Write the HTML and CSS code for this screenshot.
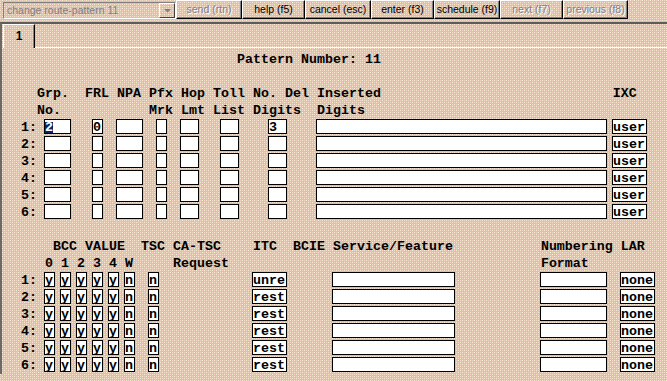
FILE: index.html
```html
<!DOCTYPE html>
<html>
<head>
<meta charset="utf-8">
<title>change route-pattern 11</title>
<link rel="stylesheet" href="styles.css">
</head>
<body>
<div class="toolbar">
  <div class="combo"><span class="combo-text">change route-pattern 11</span><span class="combo-btn"><svg width="7" height="4" viewBox="0 0 7 4"><polygon points="0,0 7,0 3.5,3.5" fill="#808080"/></svg></span></div>
  <button class="btn w66 dis">send (rtn)</button>
  <button class="btn w63">help (f5)</button>
  <button class="btn w66">cancel (esc)</button>
  <button class="btn w63">enter (f3)</button>
  <button class="btn w66">schedule (f9)</button>
  <button class="btn w63 dis">next (f7)</button>
  <button class="btn w65 dis">previous (f8)</button>
</div>
<div class="main">
  <div class="tabs"><div class="tab">1</div><div class="tab-fill"></div></div>
  <div class="form">
<div class="ln">                             Pattern Number: 11</div>
<div class="ln"></div>
<div class="ln">    Grp.  FRL NPA Pfx Hop Toll No. Del Inserted                             IXC</div>
<div class="ln">    No.           Mrk Lmt List Digits  Digits</div>
<div class="ln">  1: <span class="f w3"><span class="sel">2</span></span>   <span class="f w1">0</span>  <span class="f w3"></span>  <span class="f w1"></span>  <span class="f w2"></span>   <span class="f w2"></span>    <span class="f w2">3</span>    <span class="f w36"></span> <span class="f w4">user</span></div>
<div class="ln">  2: <span class="f w3"></span>   <span class="f w1"></span>  <span class="f w3"></span>  <span class="f w1"></span>  <span class="f w2"></span>   <span class="f w2"></span>    <span class="f w2"></span>    <span class="f w36"></span> <span class="f w4">user</span></div>
<div class="ln">  3: <span class="f w3"></span>   <span class="f w1"></span>  <span class="f w3"></span>  <span class="f w1"></span>  <span class="f w2"></span>   <span class="f w2"></span>    <span class="f w2"></span>    <span class="f w36"></span> <span class="f w4">user</span></div>
<div class="ln">  4: <span class="f w3"></span>   <span class="f w1"></span>  <span class="f w3"></span>  <span class="f w1"></span>  <span class="f w2"></span>   <span class="f w2"></span>    <span class="f w2"></span>    <span class="f w36"></span> <span class="f w4">user</span></div>
<div class="ln">  5: <span class="f w3"></span>   <span class="f w1"></span>  <span class="f w3"></span>  <span class="f w1"></span>  <span class="f w2"></span>   <span class="f w2"></span>    <span class="f w2"></span>    <span class="f w36"></span> <span class="f w4">user</span></div>
<div class="ln">  6: <span class="f w3"></span>   <span class="f w1"></span>  <span class="f w3"></span>  <span class="f w1"></span>  <span class="f w2"></span>   <span class="f w2"></span>    <span class="f w2"></span>    <span class="f w36"></span> <span class="f w4">user</span></div>
<div class="ln"></div>
<div class="ln">      BCC VALUE  TSC CA-TSC    ITC  BCIE Service/Feature           Numbering LAR</div>
<div class="ln">     0 1 2 3 4 W     Request                                       Format</div>
<div class="ln">  1: <span class="f w1">y</span> <span class="f w1">y</span> <span class="f w1">y</span> <span class="f w1">y</span> <span class="f w1">y</span> <span class="f w1">n</span>  <span class="f w1">n</span>            <span class="f w4">unre</span>      <span class="f w15"></span>           <span class="f w8"></span>  <span class="f w4">none</span></div>
<div class="ln">  2: <span class="f w1">y</span> <span class="f w1">y</span> <span class="f w1">y</span> <span class="f w1">y</span> <span class="f w1">y</span> <span class="f w1">n</span>  <span class="f w1">n</span>            <span class="f w4">rest</span>      <span class="f w15"></span>           <span class="f w8"></span>  <span class="f w4">none</span></div>
<div class="ln">  3: <span class="f w1">y</span> <span class="f w1">y</span> <span class="f w1">y</span> <span class="f w1">y</span> <span class="f w1">y</span> <span class="f w1">n</span>  <span class="f w1">n</span>            <span class="f w4">rest</span>      <span class="f w15"></span>           <span class="f w8"></span>  <span class="f w4">none</span></div>
<div class="ln">  4: <span class="f w1">y</span> <span class="f w1">y</span> <span class="f w1">y</span> <span class="f w1">y</span> <span class="f w1">y</span> <span class="f w1">n</span>  <span class="f w1">n</span>            <span class="f w4">rest</span>      <span class="f w15"></span>           <span class="f w8"></span>  <span class="f w4">none</span></div>
<div class="ln">  5: <span class="f w1">y</span> <span class="f w1">y</span> <span class="f w1">y</span> <span class="f w1">y</span> <span class="f w1">y</span> <span class="f w1">n</span>  <span class="f w1">n</span>            <span class="f w4">rest</span>      <span class="f w15"></span>           <span class="f w8"></span>  <span class="f w4">none</span></div>
<div class="ln">  6: <span class="f w1">y</span> <span class="f w1">y</span> <span class="f w1">y</span> <span class="f w1">y</span> <span class="f w1">y</span> <span class="f w1">n</span>  <span class="f w1">n</span>            <span class="f w4">rest</span>      <span class="f w15"></span>           <span class="f w8"></span>  <span class="f w4">none</span></div>
  </div>
</div>
</body>
</html>
```
FILE: styles.css
```css
html, body {
  margin: 0;
  padding: 0;
}
body {
  width: 667px;
  height: 381px;
  overflow: hidden;
  background-color: #c8c6c2;
  background-image:
    conic-gradient(from 270deg at 1px 1px, #f8d0d0 25%, transparent 0),
    conic-gradient(from 270deg at 1px 1px, #f8d0d0 25%, transparent 0),
    conic-gradient(from 270deg at 1px 1px, #f4f0c8 25%, transparent 0),
    conic-gradient(from 270deg at 1px 1px, #f4f0c8 25%, transparent 0);
  background-size: 4px 4px;
  background-position: 0 0, 2px 2px, 2px 0, 0 2px;
  font-family: "Liberation Sans", Arial, sans-serif;
}

/* toolbar */
.toolbar {
  display: flex;
  align-items: flex-start;
  height: 22px;
}
.combo {
  box-sizing: border-box;
  width: 173px;
  height: 17px;
  margin: 2px 0 0 3px;
  border: 1px solid;
  border-color: #808080 #ffffff #ffffff #808080;
  display: flex;
  align-items: center;
  justify-content: space-between;
}
.combo-text {
  padding-left: 3px;
  font-size: 10.5px;
  line-height: 15px;
  color: #808080;
  white-space: nowrap;
}
.combo-btn {
  box-sizing: border-box;
  width: 16px;
  height: 15px;
  border: 1px solid;
  border-color: #ffffff #404040 #404040 #ffffff;
  display: flex;
  align-items: center;
  justify-content: center;
}
.combo-btn svg {
  display: block;
}
.btn {
  box-sizing: border-box;
  height: 19px;
  margin: 0;
  padding: 0;
  background: transparent;
  border: 1px solid;
  border-color: #ffffff #000000 #000000 #ffffff;
  box-shadow: inset -1px -1px #808080;
  font-family: "Liberation Sans", Arial, sans-serif;
  font-size: 10.5px;
  line-height: 17px;
  color: #000000;
  text-align: center;
  white-space: nowrap;
}
.btn.dis {
  color: #808080;
  text-shadow: 1px 1px #ffffff;
}
.w63 { width: 63px; }
.w65 { width: 65px; }
.w66 { width: 66px; }

/* tab area */
.main {
  border-top: 2px solid #5c5c5c;
  border-left: 2px solid #6a6a6a;
}
.tabs {
  display: flex;
  height: 24px;
}
.tab {
  box-sizing: border-box;
  width: 32px;
  height: 24px;
  margin-left: 1px;
  border-left: 1px solid #ffffff;
  border-top: 1px solid #ffffff;
  border-right: 1px solid #000000;
  box-shadow: inset -1px 0 #808080;
  font-weight: bold;
  font-size: 12px;
  line-height: 22px;
  text-align: center;
}
.tab-fill {
  flex: 1;
  border-bottom: 1px solid #ffffff;
}

/* terminal form */
.form {
  padding: 3px 0 0 3px;
  font-family: "Liberation Mono", "DejaVu Sans Mono", monospace;
  font-weight: bold;
  font-size: 13.333px;
  color: #000000;
}
.ln {
  height: 17px;
  line-height: 17px;
  white-space: pre;
}
.f {
  display: inline-block;
  vertical-align: top;
  box-sizing: border-box;
  height: 15px;
  line-height: 15px;
  margin: 0 -2px 0 -1px;
  border: 1px solid #000000;
  background: #ffffff;
  overflow: visible;
}
.f.w1 { width: 11px; }
.f.w2 { width: 19px; }
.f.w3 { width: 27px; }
.f.w4 { width: 35px; }
.f.w8 { width: 67px; }
.f.w15 { width: 123px; }
.f.w36 { width: 291px; }
.sel {
  display: inline-block;
  vertical-align: top;
  height: 11px;
  line-height: 11px;
  margin-top: 2px;
  background: #0a246a;
  color: #ffffff;
}
```
